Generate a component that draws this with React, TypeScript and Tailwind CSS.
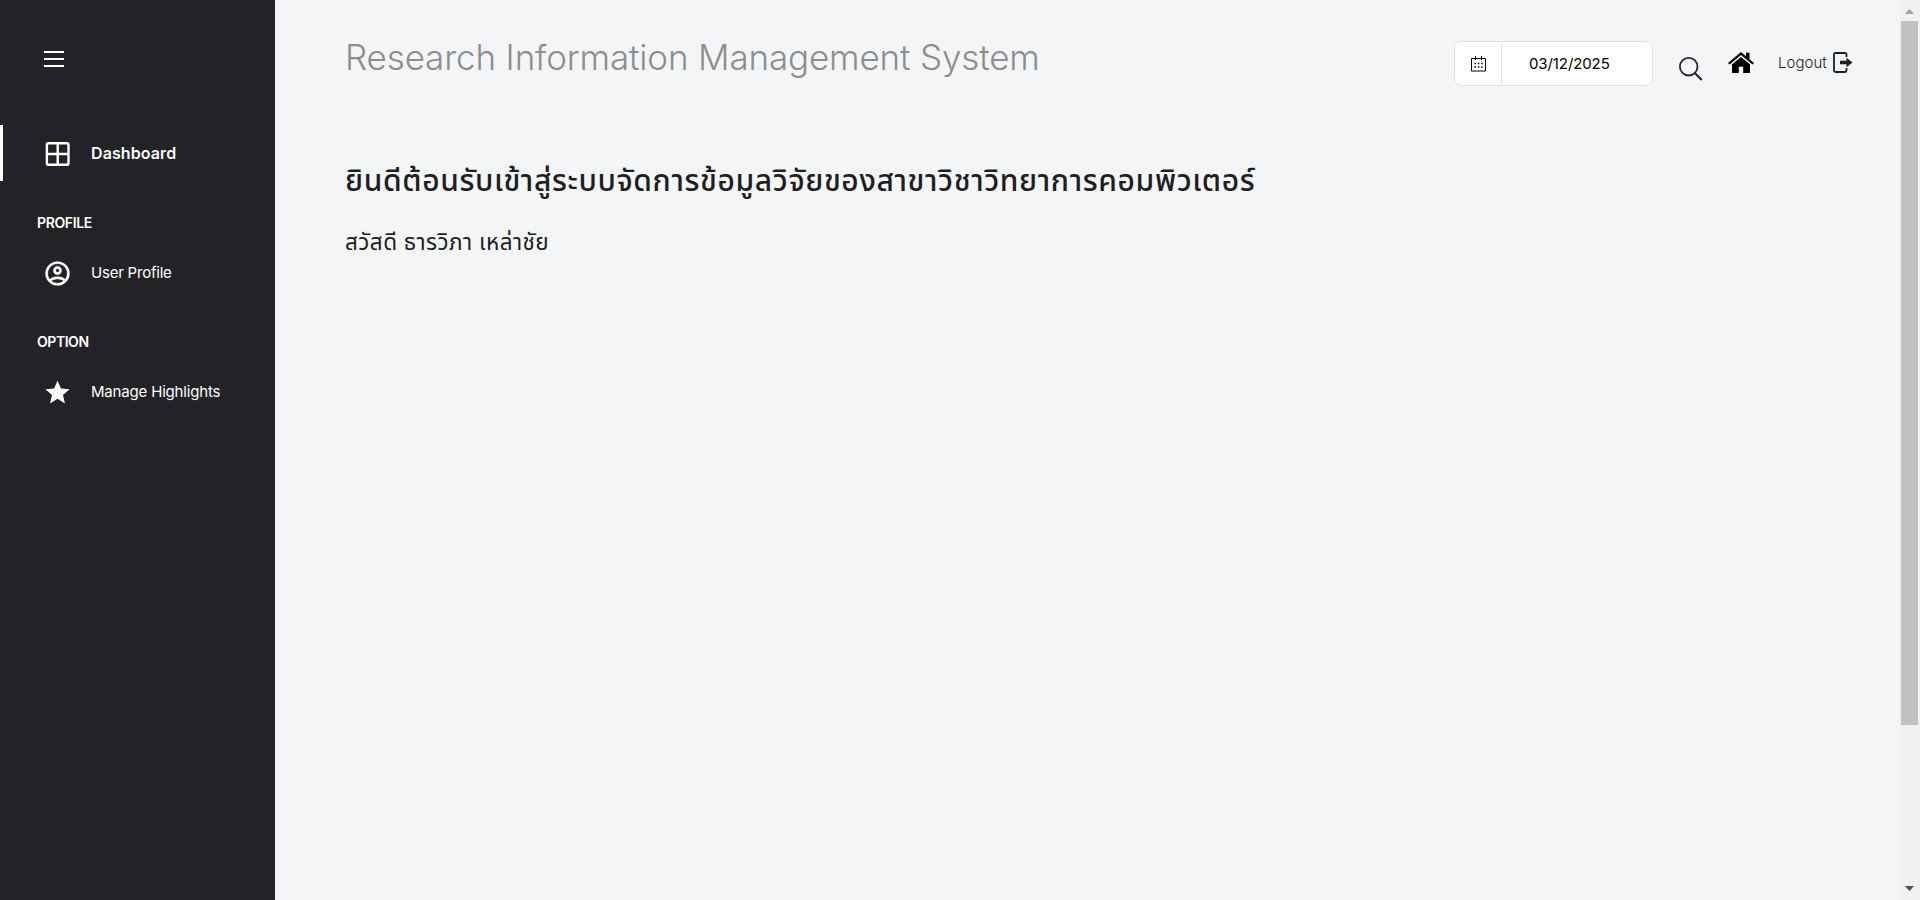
import React from "react";

const thai = "font-['Noto_Sans_Thai','Noto_Sans','Liberation_Sans',sans-serif]";

function GridIcon() {
  return (
    <svg className="ml-[45px] h-6 w-[25px] shrink-0" viewBox="0 0 25 24" fill="none" stroke="currentColor" strokeWidth="2.4">
      <rect x="1.9" y="1.2" width="21.6" height="21.6" rx="1.6" />
      <path d="M12.7 1v22M2 12h21.500" />
    </svg>
  );
}

function UserIcon() {
  return (
    <svg className="ml-[43px] h-[29px] w-[29px] shrink-0" viewBox="0 0 24 24" fill="currentColor">
      <path d="M12,2A10,10 0 0,0 2,12A10,10 0 0,0 12,22A10,10 0 0,0 22,12A10,10 0 0,0 12,2M7.07,18.28C7.5,17.38 10.12,16.5 12,16.5C13.88,16.5 16.5,17.38 16.93,18.28C15.57,19.36 13.86,20 12,20C10.14,20 8.43,19.36 7.07,18.28M18.36,16.83C16.93,15.09 13.46,14.5 12,14.5C10.54,14.5 7.07,15.09 5.64,16.83C4.62,15.5 4,13.82 4,12C4,7.59 7.59,4 12,4C16.41,4 20,7.59 20,12C20,13.82 19.38,15.5 18.36,16.83M12,6C10.06,6 8.5,7.56 8.5,9.5C8.5,11.44 10.06,13 12,13C13.94,13 15.5,11.44 15.5,9.5C15.5,7.56 13.94,6 12,6M12,11A1.5,1.5 0 0,1 10.5,9.5A1.5,1.5 0 0,1 12,8A1.5,1.5 0 0,1 13.5,9.5A1.5,1.5 0 0,1 12,11Z" stroke="currentColor" strokeWidth="0.2" />
    </svg>
  );
}

function StarIcon() {
  return (
    <svg className="ml-[43px] h-[29px] w-[29px] shrink-0" viewBox="0 0 24 24" fill="currentColor">
      <path d="M12,17.27L18.18,21L16.54,13.97L22,9.24L14.81,8.62L12,2L9.19,8.62L2,9.24L7.45,13.97L5.82,21L12,17.27Z" />
    </svg>
  );
}

function Sidebar() {
  return (
    <aside className="flex w-[275px] shrink-0 flex-col bg-[#232227] text-white">
      <button className="mt-[51px] ml-11 flex h-4 w-5 flex-col justify-between" aria-label="Menu">
        <span className="h-[2px] w-5 bg-white" />
        <span className="h-[2px] w-5 bg-white" />
        <span className="h-[2px] w-5 bg-white" />
      </button>
      <nav className="mt-[58px] flex flex-col">
        <a className="flex h-14 items-center border-l-[3px] border-white">
          <span className="-ml-[3px] flex items-center pt-0.5"><GridIcon /></span>
          <span className="ml-[21px] pb-px text-[16px] font-semibold tracking-[0.1px]">Dashboard</span>
        </a>
        <h2 className="mt-8 ml-[37px] h-5 text-[14px] leading-5 font-semibold tracking-[-0.35px]">PROFILE</h2>
        <a className="mt-3 flex h-14 items-center">
          <UserIcon />
          <span className="ml-[19px] text-[15px] tracking-[-0.22px]">User Profile</span>
        </a>
        <h2 className="mt-[31px] ml-[37px] h-5 text-[14px] leading-5 font-semibold tracking-[-0.45px]">OPTION</h2>
        <a className="mt-3 flex h-14 items-center">
          <StarIcon />
          <span className="ml-[19px] text-[15px] tracking-[-0.18px]">Manage Highlights</span>
        </a>
      </nav>
    </aside>
  );
}

function DateField() {
  return (
    <div className="mt-[41px] flex h-[45px] w-[199px] items-center rounded-[7px] border border-[#dee2e6] bg-white text-black">
      <div className="flex h-[41px] w-[47px] items-center justify-center border-r border-[#dee2e6]">
        <svg className="h-4 w-4" viewBox="0 0 16 16" fill="none" stroke="currentColor">
          <path d="M1.500 2.500h14v12.500h-14zM5.500 0v4M11.500 0v4" />
          <path d="M4.500 7.500h1.500M7.800 7.500h1.500M11.100 7.500h1.500M4.500 11h1.500M7.800 11h1.500M11.100 11h1.500" strokeWidth="1.500" />
        </svg>
      </div>
      <span className="ml-[27px] pt-0.5 text-[15px] tracking-[-0.1px]">03/12/2025</span>
    </div>
  );
}

function Header() {
  return (
    <header className="flex h-[150px] items-start">
      <h1 className="mt-8 ml-[70px] w-[1109px] text-[35px] leading-[51px] font-[360] tracking-[-0.15px] whitespace-nowrap text-[#8d8d8d]">
        Research Information Management System
      </h1>
      <DateField />
      <svg className="mt-[57px] ml-[26px] h-6 w-6 text-[#212529]" viewBox="0 0 24 24" fill="none" stroke="currentColor">
        <circle cx="9.700" cy="9.700" r="8.800" strokeWidth="1.800" />
        <path d="M15.800 16l7 7" strokeWidth="2.200" />
      </svg>
      <svg className="mt-[52px] ml-[25px] h-[21px] w-[26px] text-black" viewBox="0 0 26 21" fill="currentColor">
        <path d="M13 0L18 4.200V.8h3.500v6.400L26 11l-1.500 1.500L13 3.100 1.500 12.500 0 11z" />
        <path d="M13 5L22 12.300V21h-6.800v-6.300h-4.400V21H4v-8.700z" />
      </svg>
      <span className="mt-[51px] ml-6 w-[55px] text-[15px] leading-6 font-light tracking-[0.05px] text-[#1f1f1f]">Logout</span>
      <svg className="mt-[52px] h-[21px] w-5 text-[#1f1f1f]" viewBox="0 0 20 21" fill="none" stroke="currentColor" strokeWidth="1.800">
        <path d="M13.500 5V2.500q0-1.500-1.500-1.500H2.500Q1 1 1 2.500v16q0 1.500 1.500 1.500H12q1.500 0 1.500-1.500V16" />
        <path d="M7 8.700h6.500V5.700l6 4.800-6 4.800v-3H7z" fill="currentColor" stroke="none" />
      </svg>
    </header>
  );
}

function Scrollbar() {
  return (
    <div className="flex w-[21px] shrink-0 flex-col items-center bg-[#f1f1f1]">
      <svg className="mt-[9px] h-[5px] w-[9px]" viewBox="0 0 9 5"><path d="M4.500 0L9 5H0z" fill="#a3a3a3" /></svg>
      <div className="mt-[7px] h-[704px] w-[17px] bg-[#c1c1c1]" />
      <svg className="mt-auto mb-[9px] h-[5px] w-[9px]" viewBox="0 0 9 5"><path d="M4.500 5L9 0H0z" fill="#505050" /></svg>
    </div>
  );
}

export default function App() {
  return (
    <div className="flex h-[900px] w-[1920px] overflow-hidden bg-[#f4f5f7] font-['Inter',sans-serif]">
      <Sidebar />
      <main className="flex w-[1624px] shrink-0 flex-col">
        <Header />
        <div className={`ml-[70px] text-[#1f1f1f] whitespace-nowrap ${thai}`}>
          <h3 className="mt-0.5 h-[60px] text-[30px] leading-[60px] font-medium tracking-[0.63px]">ยินดีต้อนรับเข้าสู่ระบบจัดการข้อมูลวิจัยของสาขาวิชาวิทยาการคอมพิวเตอร์</h3>
          <h4 className="mt-[7px] h-12 text-[22.500px] leading-12 font-normal tracking-[0.45px]">สวัสดี ธารวิภา เหล่าชัย</h4>
        </div>
      </main>
      <Scrollbar />
    </div>
  );
}
